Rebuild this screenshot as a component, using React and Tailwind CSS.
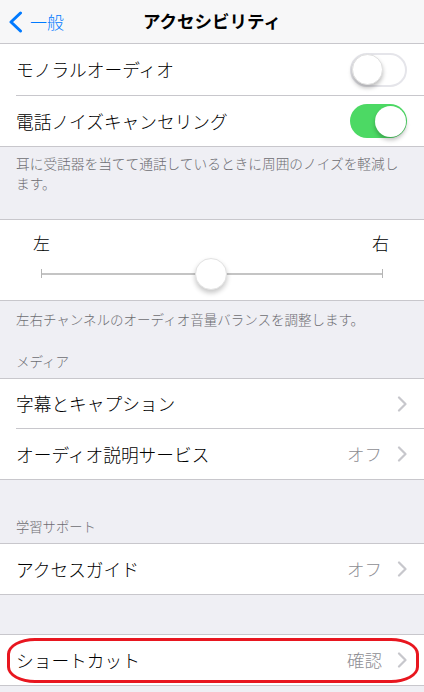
import React from 'react';

const font = { fontFamily: '"Noto Sans CJK JP", "Noto Sans", sans-serif' };

const Chevron = () => (
    <svg width="10" height="16" viewBox="0 0 10 16" className="shrink-0">
        <polyline points="2,1.5 8.5,8 2,14.5" fill="none" stroke="#c7c7cc" strokeWidth="2.2" strokeLinecap="round" strokeLinejoin="round" />
    </svg>
);

const Toggle = ({ on }) => (
    <div
        className={
            on
                ? 'w-[57px] h-[34px] rounded-full bg-[#4cd964] relative shrink-0'
                : 'w-[57px] h-[34px] rounded-full bg-white border-2 border-[#e5e5ea] relative shrink-0'
        }
    >
        <div
            className={
                on
                    ? 'absolute top-[1.5px] right-[1.5px] w-[31px] h-[31px] rounded-full bg-white shadow-[0_3px_4px_rgba(0,0,0,0.25)]'
                    : 'absolute top-[-0.5px] left-[-0.5px] w-[31px] h-[31px] rounded-full bg-white shadow-[0_3px_4px_rgba(0,0,0,0.25)] border border-[#e0e0e0]'
            }
        />
    </div>
);

const Row = ({ label, value, chevron, toggle, h = 'h-[50px]' }) => (
    <div className={`${h} flex items-center pl-[16px] pr-[17px] bg-white`}>
        <span className="flex-1 text-[17.7px] font-light text-black">{label}</span>
        {value && <span className="text-[17.5px] font-light text-[#8e8e93] mr-[15px]">{value}</span>}
        {chevron && <Chevron />}
        {toggle !== undefined && <Toggle on={toggle} />}
    </div>
);

const Sep = ({ inset }) => (
    <div className="bg-white">
        <div className={inset ? 'ml-[16px] h-px bg-[#c8c7cc]' : 'h-px bg-[#c8c7cc]'} />
    </div>
);

const App = () => {
    return (
        <div className="relative w-[424px] h-[692px] overflow-hidden bg-[#efeff4]" style={font}>
            {/* nav bar */}
            <div className="h-[43px] bg-[#f7f7f8] flex items-center relative">
                <div className="flex items-center pl-[8px] text-[#007aff]">
                    <svg width="15" height="22" viewBox="0 0 15 22">
                        <polyline points="12.5,2 3,11 12.5,20" fill="none" stroke="#007aff" strokeWidth="3" strokeLinecap="round" strokeLinejoin="round" />
                    </svg>
                    <span className="ml-[7px] text-[17px] font-light leading-none">一般</span>
                </div>
                <div className="absolute inset-x-0 top-0 h-[43px] flex items-center justify-center pointer-events-none">
                    <span className="text-[17.5px] font-bold text-black">アクセシビリティ</span>
                </div>
            </div>
            <Sep />

            <Row label="モノラルオーディオ" toggle={false} h="h-[51px]" />
            <Sep inset />
            <Row label="電話ノイズキャンセリング" toggle={true} />
            <Sep />

            <div className="h-[72px] px-[16px] pt-[6px] text-[13.7px] font-light leading-[20px] text-[#6d6d72]">
                耳に受話器を当てて通話しているときに周囲のノイズを軽減します。
            </div>

            <Sep />
            <div className="h-[80px] bg-white flex flex-col">
                <div className="flex justify-between pl-[33px] pr-[35px] pt-[11px] text-[17px] font-light leading-[24px] text-black">
                    <span>左</span>
                    <span>右</span>
                </div>
                <div className="relative mx-[41px] mt-[14px] h-[9px] flex items-center">
                    <div className="w-px h-[9px] bg-[#b5b5b5]" />
                    <div className="flex-1 h-[2px] bg-[#c4c4c4]" />
                    <div className="w-px h-[9px] bg-[#b5b5b5]" />
                    <div className="absolute left-[154px] top-[-11.5px] w-[32px] h-[32px] rounded-full bg-white border border-[#e2e2e2] shadow-[0_3px_5px_rgba(0,0,0,0.22)]" />
                </div>
            </div>
            <Sep />

            <div className="h-[77px] px-[16px] flex flex-col text-[13.5px] font-light leading-[20px] text-[#6d6d72]">
                <div className="pt-[8px]">左右チャンネルのオーディオ音量バランスを調整します。</div>
                <div className="mt-auto pb-[7px]">メディア</div>
            </div>
            <Sep />

            <Row label="字幕とキャプション" chevron h="h-[49px]" />
            <Sep inset />
            <Row label="オーディオ説明サービス" value="オフ" chevron />
            <Sep />

            <div className="h-[63px] px-[16px] flex flex-col text-[13.3px] font-light leading-[20px] text-[#6d6d72]">
                <div className="mt-auto pb-[6px]">学習サポート</div>
            </div>
            <Sep />

            <Row label="アクセスガイド" value="オフ" chevron />
            <Sep />

            <div className="h-[39px]" />
            <Sep />

            <Row label="ショートカット" value="確認" chevron />
            <Sep />

            {/* red annotation ring */}
            <div className="absolute left-[7px] top-[638px] w-[412px] h-[45px] border-[3.5px] border-[#e8161f] rounded-[28px/16px] pointer-events-none" />
        </div>
    );
};

export default App;
